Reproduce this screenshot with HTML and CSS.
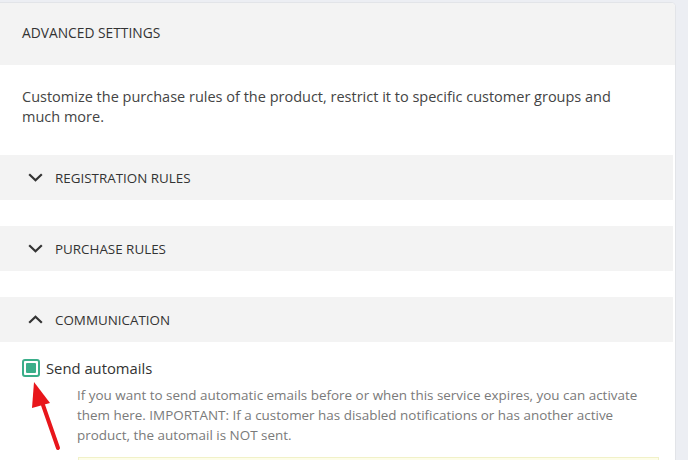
FILE: index.html
```html
<!DOCTYPE html>
<html>
<head>
<meta charset="utf-8">
<link rel="stylesheet" href="styles.css">
</head>
<body>
<div class="page">
  <div class="card">
    <div class="card-head">ADVANCED SETTINGS</div>
    <div class="intro"><p>Customize the purchase rules of the product, restrict it to specific customer groups and much more.</p></div>
    <div class="section">
      <div class="sec-head">
        <svg class="chev" viewBox="0 0 15 9" width="15" height="9"><path d="M1.2 1.2 L7.5 7.3 L13.8 1.2" fill="none" stroke="#333" stroke-width="2.2"/></svg>
        <span>REGISTRATION RULES</span>
      </div>
    </div>
    <div class="section">
      <div class="sec-head">
        <svg class="chev" viewBox="0 0 15 9" width="15" height="9"><path d="M1.2 1.2 L7.5 7.3 L13.8 1.2" fill="none" stroke="#333" stroke-width="2.2"/></svg>
        <span>PURCHASE RULES</span>
      </div>
    </div>
    <div class="section open">
      <div class="sec-head">
        <svg class="chev" viewBox="0 0 15 9" width="15" height="9"><path d="M1.2 7.8 L7.5 1.7 L13.8 7.8" fill="none" stroke="#333" stroke-width="2.2"/></svg>
        <span>COMMUNICATION</span>
      </div>
      <div class="sec-body">
        <label class="check-row">
          <span class="checkbox"><span class="check-fill"></span></span>
          <span class="check-label">Send automails</span>
        </label>
        <p class="help">If you want to send automatic emails before or when this service expires, you can activate them here. IMPORTANT: If a customer has disabled notifications or has another active product, the automail is NOT sent.</p>
        <div class="notice"></div>
      </div>
    </div>
  </div>
  <svg class="arrow" width="60" height="90" viewBox="0 0 60 90">
    <path d="M42 71 L27 28" stroke="#e8161b" stroke-width="4" stroke-linecap="round" fill="none"/>
    <path d="M18 5 L34 26 L16 31 Z" fill="#e8161b"/>
  </svg>
</div>
</body>
</html>
```
FILE: styles.css
```css
* { box-sizing: border-box; }
html, body {
  margin: 0;
  padding: 0;
  background: #eceef3;
  overflow: hidden;
  height: 460px;
}
body {
  font-family: "Open Sans", "Noto Sans", sans-serif;
  color: #333;
}
.page {
  position: relative;
  width: 688px;
  height: 460px;
  padding-top: 2px;
}
.card {
  width: 676px;
  height: 480px;
  background: #fff;
  border: 1px solid #e2e4e8;
  border-left: none;
  border-radius: 0 5px 0 0;
  overflow: hidden;
}
.card-head {
  height: 62px;
  background: #f3f3f3;
  padding: 0 0 3px 22px;
  display: flex;
  align-items: center;
  font-size: 13.8px;
}
.intro {
  height: 90px;
  padding: 22px 0 0 22px;
}
.intro p {
  margin: 0;
  width: 625px;
  font-size: 14.5px;
  line-height: 20px;
  color: #444;
}
.section {
  margin-bottom: 26px;
}
.section.open {
  margin-bottom: 0;
}
.sec-head {
  height: 45px;
  background: #f3f3f3;
  display: flex;
  align-items: center;
  padding-left: 28px;
  font-size: 13.4px;
  margin-right: 2px;
}
.chev {
  margin-right: 12px;
  display: block;
}
.sec-body {
  padding: 16px 0 0 22px;
}
.check-row {
  display: flex;
  align-items: center;
  gap: 6px;
}
.checkbox {
  width: 18px;
  height: 18px;
  border: 2px solid #3aae8a;
  border-radius: 3px;
  display: flex;
  align-items: center;
  justify-content: center;
  background: #fff;
}
.check-fill {
  width: 10px;
  height: 10px;
  background: #3aae8a;
  border-radius: 1px;
}
.check-label {
  font-size: 14.8px;
  color: #333;
}
.help {
  margin: 7px 0 0 55px;
  width: 575px;
  font-size: 13.45px;
  line-height: 20px;
  color: #7a7a7a;
}
.notice {
  margin: 12px 16px 0 56px;
  height: 40px;
  background: #fdfde9;
  border: 1px solid #f1f1c8;
}
.arrow {
  position: absolute;
  left: 16px;
  top: 377px;
}
```
